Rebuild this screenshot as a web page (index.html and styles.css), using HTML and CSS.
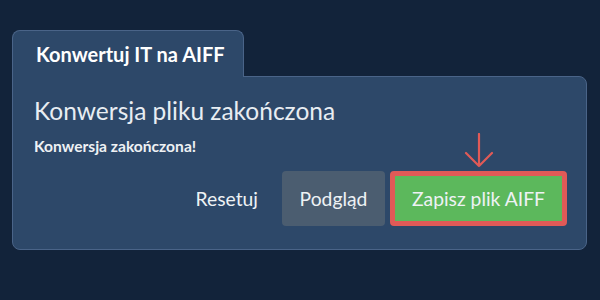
FILE: index.html
```html
<!DOCTYPE html>
<html lang="pl">
<head>
<meta charset="utf-8">
<link rel="stylesheet" href="styles.css">
</head>
<body>
<div class="wrap">
  <div class="tab">Konwertuj IT na AIFF</div>
  <div class="panel">
    <h1 class="title">Konwersja pliku zakończona</h1>
    <p class="msg">Konwersja zakończona!</p>
    <div class="actions">
      <button class="btn btn-link">Resetuj</button>
      <button class="btn btn-gray">Podgląd</button>
      <div class="save-wrap">
        <svg class="arrow" width="30" height="36" viewBox="0 0 30 36">
          <path d="M15 1 V33 M2 20 L15 33 L28 20" fill="none" stroke="#e05a57" stroke-width="2.2" stroke-linecap="round" stroke-linejoin="round"/>
        </svg>
        <button class="btn btn-save">Zapisz plik AIFF</button>
      </div>
    </div>
  </div>
</div>
</body>
</html>
```
FILE: styles.css
```css
html, body {
  margin: 0;
  padding: 0;
  background: #12233a;
  font-family: Lato, "Noto Sans", sans-serif;
}
.wrap {
  width: 575px;
  padding: 30px 0 0 12px;
}
.tab {
  display: inline-block;
  box-sizing: border-box;
  width: 232px;
  height: 47px;
  margin-bottom: -1px;
  position: relative;
  z-index: 1;
  background: #2d4869;
  border: 1px solid #4a6488;
  border-bottom: none;
  border-radius: 8px 8px 0 0;
  color: #ffffff;
  font-weight: 700;
  font-size: 20px;
  line-height: 22px;
  padding: 12px 0 0 23px;
}
.panel {
  box-sizing: border-box;
  height: 174px;
  background: #2d4869;
  border: 1px solid #4a6488;
  border-radius: 0 8px 8px 8px;
  padding: 19px 19px 0 21px;
  display: flex;
  flex-direction: column;
}
.title {
  margin: 0;
  font-weight: 400;
  font-size: 24.5px;
  line-height: 30px;
  color: #e8edf2;
}
.msg {
  margin: 11px 0 0 0;
  font-weight: 700;
  font-size: 15.6px;
  line-height: 18px;
  color: #eef1f4;
}
.actions {
  margin-top: 16px;
  display: flex;
  justify-content: flex-end;
  align-items: center;
  gap: 5px;
}
.btn {
  font-family: Lato, "Noto Sans", sans-serif;
  font-size: 19.3px;
  font-weight: 400;
  color: #eef2f5;
  border: none;
  box-sizing: border-box;
  height: 55px;
  border-radius: 4px;
  cursor: pointer;
}
.btn-link {
  background: transparent;
  padding: 0 17px;
  margin-right: 2px;
}
.btn-gray {
  background: #4b5d70;
  width: 103px;
}
.save-wrap {
  position: relative;
}
.btn-save {
  background: #5cb85c;
  border: 5px solid #e05a57;
  width: 177px;
  display: block;
}
.arrow {
  position: absolute;
  left: 74px;
  top: -38px;
}
```
